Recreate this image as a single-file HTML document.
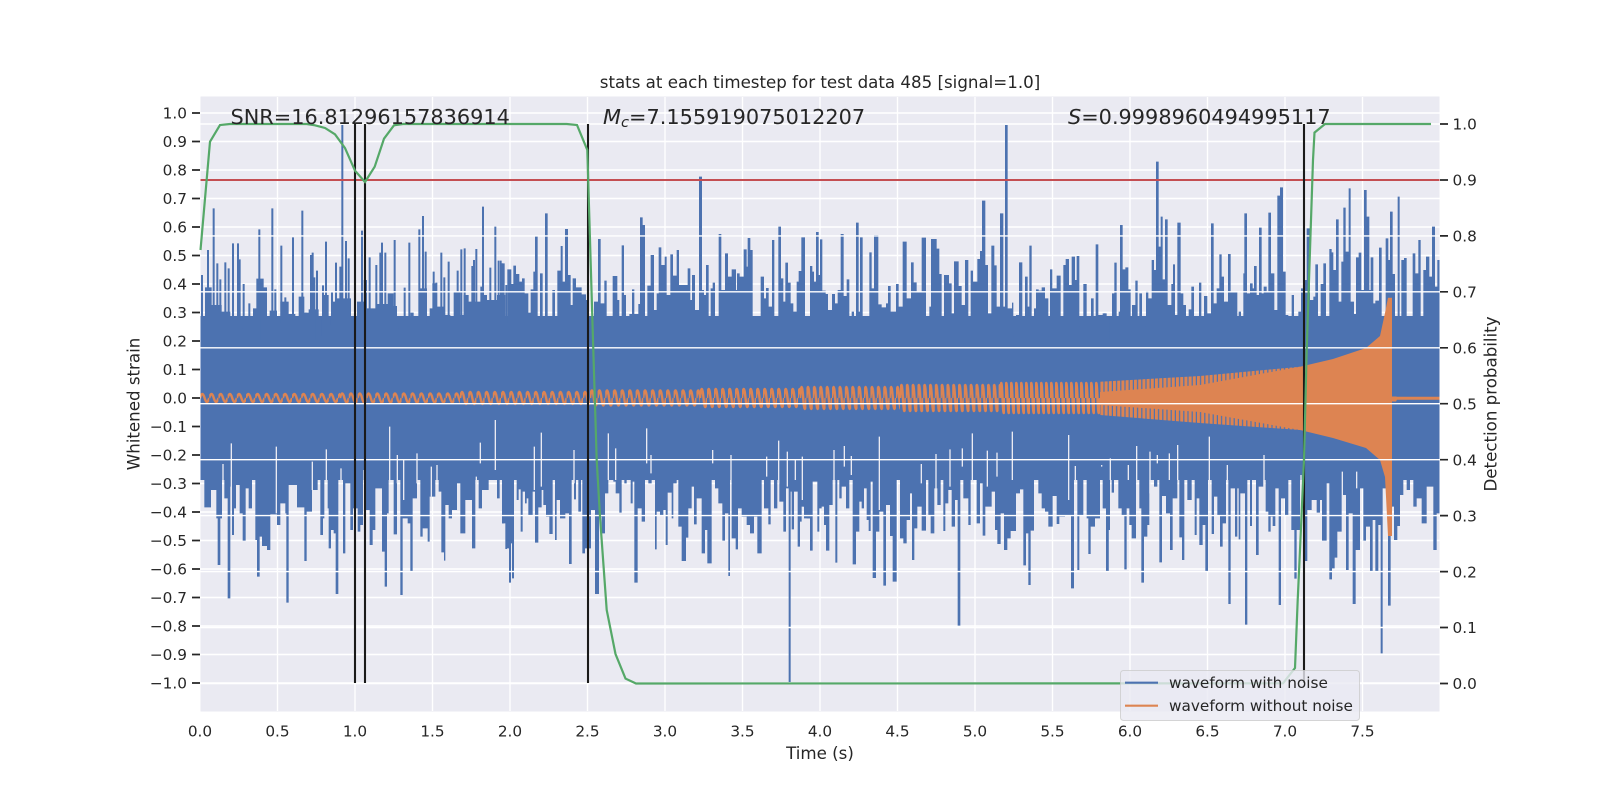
<!DOCTYPE html>
<html><head><meta charset="utf-8"><style>
html,body{margin:0;padding:0;background:#fff}
svg{display:block}
text{font-family:"DejaVu Sans","Liberation Sans",sans-serif;fill:#262626}
.t{font-size:15.3px}
.a{font-size:20.83px}
</style></head><body>
<svg width="1600" height="800" viewBox="0 0 1600 800" xmlns="http://www.w3.org/2000/svg">
<defs>
<clipPath id="ax"><rect x="200.5" y="96.5" width="1239" height="615"/></clipPath>
<pattern id="s1" x="200" y="386" width="9.2" height="24" patternUnits="userSpaceOnUse"><path d="M0 12Q2.3 4 4.6 12T9.2 12" fill="none" stroke="#dd8452" stroke-width="2.4"/></pattern>
<pattern id="s2" x="340" y="384" width="8.8" height="28" patternUnits="userSpaceOnUse"><path d="M0 14Q2.2 5 4.4 14T8.8 14" fill="none" stroke="#dd8452" stroke-width="2.4"/></pattern>
<pattern id="s3" x="460" y="382" width="8.2" height="32" patternUnits="userSpaceOnUse"><path d="M0 16Q2.05 4 4.1 16T8.2 16" fill="none" stroke="#dd8452" stroke-width="2.4"/></pattern>
<pattern id="s4" x="590" y="380" width="7.6" height="36" patternUnits="userSpaceOnUse"><path d="M0 18Q1.9 3 3.8 18T7.6 18" fill="none" stroke="#dd8452" stroke-width="2.4"/></pattern>
<pattern id="s5" x="700" y="378" width="7" height="40" patternUnits="userSpaceOnUse"><path d="M0 20Q1.75 2 3.5 20T7 20" fill="none" stroke="#dd8452" stroke-width="2.4"/></pattern>
<pattern id="s6" x="800" y="374" width="6.4" height="48" patternUnits="userSpaceOnUse"><path d="M0 24Q1.6 2 3.2 24T6.4 24" fill="none" stroke="#dd8452" stroke-width="2.4"/></pattern>
<pattern id="s7" x="900" y="372" width="5.8" height="52" patternUnits="userSpaceOnUse"><path d="M0 26Q1.45 0 2.9 26T5.8 26" fill="none" stroke="#dd8452" stroke-width="2.4"/></pattern>
<pattern id="s8" x="1000" y="368" width="5" height="60" patternUnits="userSpaceOnUse"><path d="M0 30Q1.25 0 2.5 30T5 30" fill="none" stroke="#dd8452" stroke-width="2.4"/></pattern>
<pattern id="st2" x="0" y="0" width="4.2" height="10" patternUnits="userSpaceOnUse"><rect width="3" height="10" fill="#dd8452"/></pattern>
</defs>

<rect x="200.5" y="96.5" width="1239" height="615" fill="#eaeaf2"/>
<path fill="none" stroke="#fff" stroke-width="1.4" d="M200 113H1440M200 141.5H1440M200 170H1440M200 198.5H1440M200 227H1440M200 255.5H1440M200 284H1440M200 312.5H1440M200 341H1440M200 369.5H1440M200 398H1440M200 426.5H1440M200 455H1440M200 483.5H1440M200 512H1440M200 540.5H1440M200 569H1440M200 597.5H1440M200 626H1440M200 654.5H1440M200 683H1440M277.5 97V711M355 97V711M432.5 97V711M510 97V711M587.5 97V711M665 97V711M742.5 97V711M820 97V711M897.5 97V711M975 97V711M1052.5 97V711M1130 97V711M1207.5 97V711M1285 97V711M1362.5 97V711"/>

<g clip-path="url(#ax)" fill="#4c72b0">
<rect x="200" y="316" width="1240" height="164"/>
<!-- upper, 200-507 -->
<g transform="translate(197 180) scale(.33333)">
<path d="M9 490V440H18V422H24V322H44V375H74V395H100V420H130V445H150V445H168V385H178V296H200V322H210V445H218V392H240V428H250V365H275V402H295V445H305V350H322V398H335V388H365V468H375V345H395V435H402V365H420V355H462V418H480V365H500V300H510V385H540V372H572V340H590V378H600V445H605V490H618V423H640V398H650V490H660V440H665V325H690V430H698V385H706V310H720V380H740V405H760V408H770V335H790V405H800V345H815V365H850V320H860V345H870V360H900V345H925V435H930V640H9Z"/>
<path fill="none" stroke="#4c72b0" stroke-width="6" d="M15 480V285M33 480V210M50 480V85M61 480V250M70 480V298M85 480V247M95 480V265M108 480V190M123 480V190M128 480V238M140 480V312M157 480V370M187 480V148M195 480V297M226 480V85M235 480V328M253 480V197M265 480V352M288 480V172M316 480V92M326 480V398M342 480V225M347 480V218M352 480V292M360 480V272M378 480V316M387 480V185M405 480V335M417 480V248M430 480V260M436 480V-165M447 480V183M455 480V235M495 480V152M518 480V232M538 480V255M550 480V218M555 480V188M565 480V218M593 480V180M623 480V323M637 480V188M667 480V148M678 480V108M686 480V215M710 480V275M718 480V308M733 480V218M742 480V292M755 480V245M782 480V272M793 480V208M803 480V205M826 480V258M831 480V240M838 480V207M858 480V80M880 480V263M895 480V140M905 480V242M915 480V250M928 480V315"/>
</g>
<!-- lower, 200-507 -->
<g transform="translate(197 420) scale(.33333)">
<path d="M9 0V165H22V262H42V210H58V295H62V435H70V295H75V135H82V235H92V535H100V200H105V345H111V265H117V195H128V280H137V362H146V205H155V265H165V165H175V360H180V470H188V350H195V378H210V390H220V283H240V315H250V250H265V280H268V548H275V195H300V262H322V423H329V275H345V210H362V165H370V345H378V295H382V140H392V265H395V385H402V330H410V340H416V522H424V145H438V400H445V190H460V330H468V265H482V335H490V315H498V150H505V270H518V375H527V330H535V205H555V395H563V500H570V280H575V100H590V343H600V105H610V525H617V295H632V310H640V453H647V235H660V100H670V350H677V325H692V365H698V230H715V135H725V215H733V397H741V422H745V255H755V295H765V270H780V190H790V340H805V240H825V385H835V170H845V265H855V210H875V165H890V145H900V235H908V175H915V310H925V387H930V0Z"/>
<g stroke="#eaeaf2" stroke-width="4" fill="none"><path d="M78 132V180M103 70V240M238 80V280M346 125V210M388 88V180M432 145V190M501 150V190M578 20V190M601 105V190M620 120V240M660 100V190M703 140V230M720 135V190M838 170V200M850 68V130M895 0V150"/></g>
</g>
<!-- upper, 500-810 -->
<g transform="translate(500 160) scale(.33333)">
<path d="M0 480V302H5V310H14V490H22V328H34V372H40V317H48V342H58V365H66V355H74V400H85V458H92V388H100V335H105V228H113V498H120V340H128V505H135V160H143V540H157V390H165V482H172V332H182V258H188V365H195V207H204V345H212V435H218V355H228V382H245V403H258V420H262V480H282V425H294V237H302V430H313V362H320V470H330V505H338V348H352V420H358V505H365V256H372V405H378V495H388V462H396V388H403V462H415V432H420V172H428V195H435V505H442V377H452V285H462V450H470V400H476V262H484V315H494V290H500V405H511V283H519V347H530V270H537V375H548V375H563V325H571V420H576V345H585V450H597V50H606V390H612V405H618V315H626V515H632V385H638V368H645V490H656V222H664V390H675V280H684V350H695V328H708V390H711V340H719V350H731V268H740V320H743V234H751V270H758V515H768V468H782V350H792V415H798V384H806V440H816V240H823V470H835V200H843V355H850V425H856V308H864V368H872V430H880V455H890V365H896V333H904V232H915V480H930V540H0Z"/>
</g>
<!-- lower, 500-810 -->
<g transform="translate(500 420) scale(.33333)">
<path d="M0 0V170H6V310H12V200H20V385H27V488H33V370H36V475H42V155H50V240H56V208H62V335H68V215H75V250H80V235H85V285H98V215H105V368H115V262H125V210H130V255H138V290H148V342H158V170H165V360H170V240H180V295H196V280H207V432H215V90H222V238H228V175H235V275H243V175H247V400H255V385H273V270H285V522H297V290H305V340H315V220H325V180H340V185H347V220H358V278H365V165H373V190H380V165H392V250H398V185H403V488H413V265H425V305H435V135H445V190H455V165H465V388H470V275H480V285H490V270H497V375H503V218H515V295H520V190H530V165H535V320H545V423H558V353H565V265H575V200H582V313H590V235H605V400H615V330H622V430H635V130H645V205H655V250H667V362H675V280H685V468H690V100H695V355H707V388H714V265H725V290H740V315H750V340H762V290H772V400H785V170H792V265H805V313H812V180H822V265H832V65H838V245H850V335H858V205H866V786H872V215H875V328H882V215H893V380H900V155H908V260H920V295H930V0Z"/>
<g stroke="#eaeaf2" stroke-width="4" fill="none"><path d="M103 80V210M124 38V200M222 90V190M325 40V180M347 85V180M440 25V130M453 105V160M638 90V130M693 105V180M800 110V170M836 62V190M862 95V200M886 118V180M908 108V180"/></g>
</g>
<!-- upper, 800-1110 -->
<g transform="translate(800 160) scale(.33333)">
<path d="M0 480V335H6V233H14V540H24V480H30V318H37V335H42V365H48V216H56V345H60V238H67V392H77V402H84V450H96V402H105V430H113V390H122V222H131V408H140V358H148V488H155V455H162V505H168V188H176V455H180V232H188V530H204V500H208V277H215V385H222V225H235V433H245V442H258V430H264V378H272V455H288V372H296V440H308V245H320V415H333V307H341V367H350V395H365V233H378V530H388V440H393V237H410V266H418V342H425V472H432V345H447V370H455V460H462V304H476V378H485V435H495V300H505V520H512V332H519V365H532V297H540V273H546V122H556V315H564V460H574V257H583V316H590V440H600V160H610V440H615V-105H623V445H636V428H640V530H648V465H657V307H667V525H675V350H683V440H688V257H695V480H702V445H708V388H716V392H725V382H735V415H745V530H750V328H757V385H770V347H782V530H790V315H797V297H807V375H815V290H825V360H830V288H838V500H850V372H860V500H873V415H881V480H887V253H895V465H905V495H912V460H920V475H930V540H0Z"/>
</g>
<!-- lower, 800-1110 -->
<g transform="translate(800 420) scale(.33333)">
<path d="M0 0V305H5V260H12V295H30V392H38V185H52V335H58V265H65V260H72V315H78V392H88V255H98V85H106V428H112V160H118V235H125V200H138V265H148V165H158V433H168V335H178V245H185V265H192V205H200V300H206V333H212V185H218V474H228V335H238V275H250V497H258V255H270V348H278V485H290V175H300V355H310V370H320V300H330V220H336V420H343V325H352V260H365V332H378V165H385V285H392V340H403V205H412V255H422V175H430V333H436V250H445V210H455V320H465V240H473V617H481V140H490V235H505V315H512V155H530V310H540V190H548V347H556V260H575V215H585V330H592V372H602V280H612V390H622V355H632V333H648V220H660V208H670V436H678V340H685V495H692V332H702V180H715V220H725V265H735V275H745V320H758V228H770V312H778V290H795V285H813V505H822V180H832V450H838V285H850V180H860V295H865V402H872V320H885V295H900V135H910V265H918V455H926V330H930V0Z"/>
<g stroke="#eaeaf2" stroke-width="4" fill="none"><path d="M7 110V240M102 90V210M133 78V140M154 108V165M238 50V270M364 132V190M408 102V210M450 88V200M487 85V140M517 40V180M562 92V200M591 98V170M637 35V180M806 45V240M826 138V185M905 118V140"/></g>
</g>
<!-- upper, 1100-1440 -->
<g transform="translate(1100 160) scale(.33333)">
<path d="M0 480V465H8V460H16V468H28V535H36V400H43V308H50V540H56V455H60V195H68V328H76V322H85V388H92V515H96V435H106V362H113V525H118V400H126V490H132V500H138V393H145V415H155V300H162V330H168V5H176V260H182V170H188V358H195V178H203V435H214V372H219V313H225V465H232V188H242V400H250V435H258V480H266V448H274V380H282V525H297V368H304V475H312V408H322V460H333V190H341V430H350V385H358V283H365V350H372V425H384V282H392V395H412V470H416V455H423V525H430V340H433V160H441V400H450V370H458V385H462V318H470V405H477V203H485V400H491V380H500V395H505V158H513V340H523V450H532V107H540V82H549V335H557V465H565V475H575V405H582V540H590V490H595V455H603V385H610V360H620V205H630V420H640V410H646V313H654V490H662V372H670V310H678V535H688V267H695V277H700V330H708V178H716V425H724V305H730V143H737V275H746V85H752V425H762V462H768V292H776V278H784V390H792V90H800V170H808V390H812V292H820V430H826V422H837V263H845V540H857V235H865V300H870V155H878V342H885V515H893V110H899V470H904V300H912V294H920V540H930V550H938V280H946V340H955V240H962V500H970V330H978V290H988V350H996V200H1005V380H1012V300H1020V540H0Z"/>
</g>
<!-- lower, 1100-1440 -->
<g transform="translate(1100 420) scale(.33333)">
<path d="M0 0V135H8V265H18V455H26V155H35V218H42V180H55V265H65V285H73V448H80V265H88V315H95V355H108V135H118V265H124V488H132V350H142V315H148V110H162V200H172V105H178V427H186V228H198V280H210V390H218V235H232V105H238V352H246V420H253V160H262V240H275V180H284V345H290V235H298V375H308V315H316V455H324V105H335V342H342V230H352V285H360V380H368V310H378V140H385V552H392V205H405V350H412V205H416V358H421V220H435V614H442V145H450V318H456V155H468V405H476V200H490V105H497V275H505V335H512V290H518V318H526V205H536V555H543V235H555V285H565V135H574V330H583V476H590V330H600V165H610V423H622V270H635V240H650V278H660V240H666V362H680V190H688V478H696V445H704V413H712V335H725V225H738V450H746V280H758V552H767V390H780V205H790V362H798V320H810V453H818V300H826V453H835V315H842V700H848V205H864V557H872V260H882V360H892V318H900V225H910V105H920V210H930V150H940V260H950V235H965V310H980V200H1000V390H1010V280H1020V0Z"/>
<g stroke="#eaeaf2" stroke-width="4" fill="none"><path d="M31 115V180M85 135V180M110 78V190M150 95V220M172 105V130M208 100V180M233 75V180M328 50V200M382 135V180M492 105V200M603 165V300M685 190V230M727 155V225M770 155V205"/></g>
</g>
</g>

<!-- orange -->
<g clip-path="url(#ax)">
<rect x="200" y="386" width="140" height="24" fill="url(#s1)"/>
<rect x="340" y="384" width="120" height="28" fill="url(#s2)"/>
<rect x="460" y="382" width="130" height="32" fill="url(#s3)"/>
<rect x="590" y="380" width="110" height="36" fill="url(#s4)"/>
<rect x="700" y="378" width="100" height="40" fill="url(#s5)"/>
<rect x="800" y="374" width="100" height="48" fill="url(#s6)"/>
<rect x="900" y="372" width="100" height="52" fill="url(#s7)"/>
<rect x="1000" y="368" width="100" height="60" fill="url(#s8)"/>
<path fill="url(#st2)" d="M1100 381.7L1200 376L1300 366.7V430L1200 423L1100 415Z"/>
<path fill="#dd8452" d="M1100 392L1200 385L1300 366.7L1333 359L1366 348L1380 336L1385 313L1388 297.7H1392V396.5H1396L1397 396.8H1440V399.8H1397L1396 401.5H1392V536H1388L1385 477L1380 460L1366 448L1333 438L1300 430L1200 412L1100 405Z"/>
</g>

<!-- right grid -->
<path fill="none" stroke="#fff" stroke-width="1.4" d="M200 124H1440M200 180H1440M200 235.9H1440M200 291.8H1440M200 347.8H1440M200 403.7H1440M200 459.7H1440M200 515.6H1440M200 571.6H1440M200 627.5H1440M200 683.5H1440"/>

<!-- lines -->
<path d="M200.5 180H1439.5" stroke="#c44e52" stroke-width="2.1" fill="none"/>
<path d="M355 124V683M365 124V683M588 124V683M1304 124V683" stroke="#1a1a1a" stroke-width="2.1" fill="none"/>
<polyline fill="none" stroke="#55a868" stroke-width="2.2" points="200.5,250 210,141.7 220,125 230,124 306.7,124 315,125.3 325,128 335,134.3 345,148 355,170.7 365,182 374.7,166.7 384,138.7 394,125.3 403,124 566.7,124 577,125 587.3,150 593,340 596.7,460 600,516.7 606.7,610 615.5,654 625.5,678.6 636,683.5 1283,683.3 1295,668 1297.7,600 1300,550 1304,460 1306.7,350 1310,250 1313,160 1314.5,132.6 1325,124 1431,124"/>

<!-- annotations -->
<text class="a" x="230.5" y="124">SNR=16.81296157836914</text>
<text class="a" x="603" y="124"><tspan font-style="italic">M</tspan><tspan font-style="italic" font-size="14.6" dy="3">c</tspan><tspan dy="-3">=7.155919075012207</tspan></text>
<text class="a" x="1068" y="124"><tspan font-style="italic">S</tspan>=0.9998960494995117</text>

<!-- legend -->
<rect x="1120.5" y="670.5" width="239" height="50" rx="3" fill="#eaeaf2" fill-opacity=".8" stroke="#cccccc" stroke-opacity=".8" stroke-width="1"/>
<path d="M1125 682.7H1158" stroke="#4c72b0" stroke-width="2.1"/>
<path d="M1125 705.7H1158" stroke="#dd8452" stroke-width="2.1"/>
<text class="t" x="1169" y="688">waveform with noise</text>
<text class="t" x="1169" y="711">waveform without noise</text>

<!-- tick marks -->
<path stroke="#262626" stroke-width="1.7" fill="none" d="M192 113H200M192 141.5H200M192 170H200M192 198.5H200M192 227H200M192 255.5H200M192 284H200M192 312.5H200M192 341H200M192 369.5H200M192 398H200M192 426.5H200M192 455H200M192 483.5H200M192 512H200M192 540.5H200M192 569H200M192 597.5H200M192 626H200M192 654.5H200M192 683H200M1440 124H1448M1440 180H1448M1440 235.9H1448M1440 291.8H1448M1440 347.8H1448M1440 403.7H1448M1440 459.7H1448M1440 515.6H1448M1440 571.6H1448M1440 627.5H1448M1440 683.5H1448"/>

<!-- left labels -->
<g text-anchor="end">
<text class="t" x="187" y="118.5">1.0</text><text class="t" x="187" y="147">0.9</text><text class="t" x="187" y="175.5">0.8</text><text class="t" x="187" y="204">0.7</text><text class="t" x="187" y="232.5">0.6</text><text class="t" x="187" y="261">0.5</text><text class="t" x="187" y="289.5">0.4</text><text class="t" x="187" y="318">0.3</text><text class="t" x="187" y="346.5">0.2</text><text class="t" x="187" y="375">0.1</text><text class="t" x="187" y="403.5">0.0</text><text class="t" x="187" y="432">−0.1</text><text class="t" x="187" y="460.5">−0.2</text><text class="t" x="187" y="489">−0.3</text><text class="t" x="187" y="517.5">−0.4</text><text class="t" x="187" y="546">−0.5</text><text class="t" x="187" y="574.5">−0.6</text><text class="t" x="187" y="603">−0.7</text><text class="t" x="187" y="631.5">−0.8</text><text class="t" x="187" y="660">−0.9</text><text class="t" x="187" y="688.5">−1.0</text>
</g>
<!-- right labels -->
<text class="t" x="1452.5" y="129.5">1.0</text><text class="t" x="1452.5" y="185.5">0.9</text><text class="t" x="1452.5" y="241.5">0.8</text><text class="t" x="1452.5" y="297.5">0.7</text><text class="t" x="1452.5" y="353.5">0.6</text><text class="t" x="1452.5" y="409.5">0.5</text><text class="t" x="1452.5" y="465.5">0.4</text><text class="t" x="1452.5" y="521.5">0.3</text><text class="t" x="1452.5" y="577.5">0.2</text><text class="t" x="1452.5" y="633">0.1</text><text class="t" x="1452.5" y="689">0.0</text>
<!-- x labels -->
<g text-anchor="middle">
<text class="t" x="200" y="736.7">0.0</text><text class="t" x="277.5" y="736.7">0.5</text><text class="t" x="355" y="736.7">1.0</text><text class="t" x="432.5" y="736.7">1.5</text><text class="t" x="510" y="736.7">2.0</text><text class="t" x="587.5" y="736.7">2.5</text><text class="t" x="665" y="736.7">3.0</text><text class="t" x="742.5" y="736.7">3.5</text><text class="t" x="820" y="736.7">4.0</text><text class="t" x="897.5" y="736.7">4.5</text><text class="t" x="975" y="736.7">5.0</text><text class="t" x="1052.5" y="736.7">5.5</text><text class="t" x="1130" y="736.7">6.0</text><text class="t" x="1207.5" y="736.7">6.5</text><text class="t" x="1285" y="736.7">7.0</text><text class="t" x="1362.5" y="736.7">7.5</text>
</g>

<text x="820" y="88" text-anchor="middle" font-size="16.67">stats at each timestep for test data 485 [signal=1.0]</text>
<text x="820" y="759" text-anchor="middle" font-size="16.67">Time (s)</text>
<text transform="translate(139.5 404) rotate(-90)" text-anchor="middle" font-size="16.67">Whitened strain</text>
<text transform="translate(1496.5 404) rotate(-90)" text-anchor="middle" font-size="16.67">Detection probability</text>
</svg>
</body></html>
